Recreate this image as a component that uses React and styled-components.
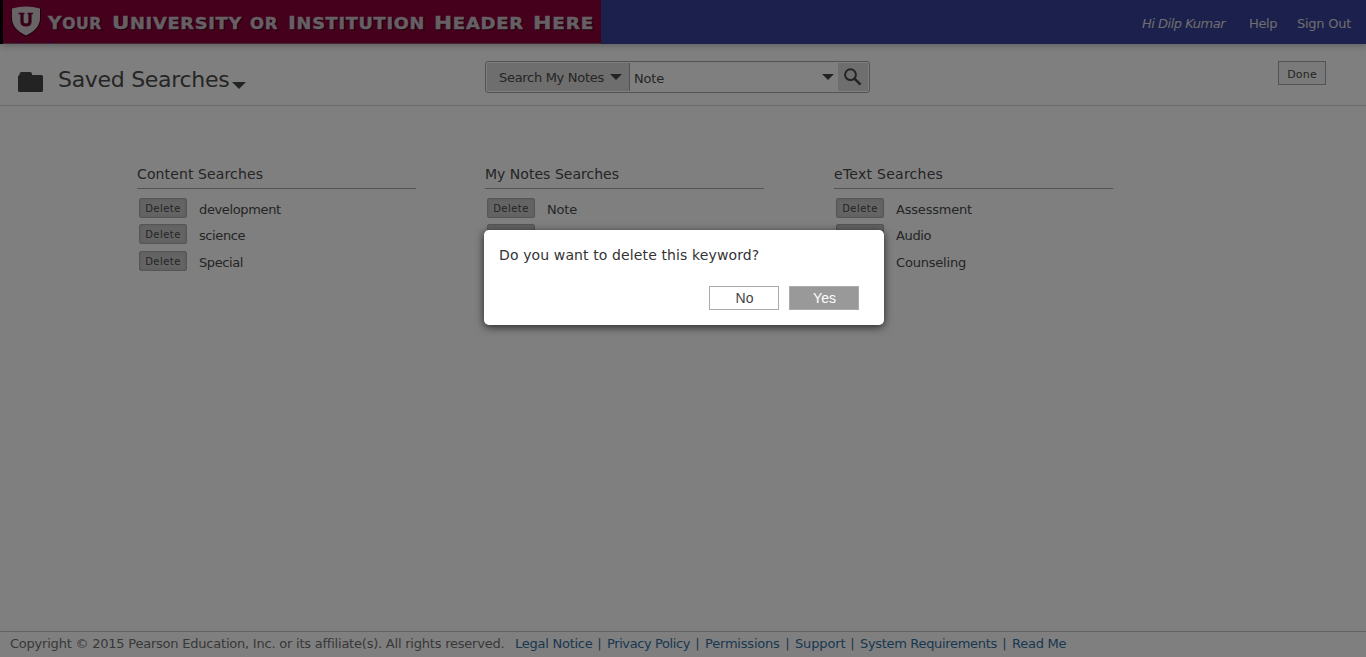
import React from "react";
import styled, { createGlobalStyle } from "styled-components";

const GlobalStyle = createGlobalStyle`
  * { box-sizing: border-box; }
  body {
    margin: 0;
    overflow: hidden;
    background: #fff;
    color: #4a4a4a;
    font-family: "DejaVu Sans", Verdana, sans-serif;
    font-size: 13px;
  }
`;

const Page = styled.div`
  height: 657px;
  display: flex;
  flex-direction: column;
`;

const Header = styled.header`
  height: 44px;
  flex: none;
  display: flex;
  justify-content: space-between;
  background: #384099;
  box-shadow: 0 1px 8px rgba(0, 0, 0, 0.3);
`;

const Banner = styled.svg`
  display: block;
  width: 601px;
  height: 44px;
`;

const UserNav = styled.nav`
  display: flex;
  padding: 16px 15px 0 0;
  line-height: 16px;
  color: #ddd;
`;

const NavItem = styled.span`
  width: ${(p) => p.$w}px;
  margin-left: ${(p) => p.$gap || 0}px;
  font-style: ${(p) => (p.$italic ? "italic" : "normal")};
  white-space: nowrap;
  letter-spacing: ${(p) => p.$ls || 0}px;
`;

const Toolbar = styled.div`
  height: 62px;
  flex: none;
  display: flex;
  align-items: flex-start;
  border-bottom: 1px solid #d6d6d6;
`;

const TitleGroup = styled.div`
  display: flex;
  width: 485px;
  padding: 20px 0 0 18px;
`;

const FolderIcon = styled.svg`
  width: 25px;
  height: 20px;
  margin: 8px 15px 0 0;
`;

const Title = styled.h1`
  margin: 0;
  width: 173px;
  font-size: 22px;
  font-weight: 400;
  line-height: 32px;
  letter-spacing: -0.3px;
  white-space: nowrap;
`;

const Caret = styled.span`
  width: 0;
  height: 0;
  flex: none;
  border: solid transparent;
  border-width: ${(p) => p.$h || 6}px ${(p) => p.$half || 6}px 0;
  border-top-color: #464646;
`;

const TitleCaret = styled(Caret)`
  margin: 18px 0 0 1px;
`;

const SearchBox = styled.div`
  display: flex;
  width: 385px;
  height: 32px;
  margin-top: 17px;
  padding: 1px;
  border: 1px solid #a6a6a6;
  border-radius: 3px;
`;

const ScopeButton = styled.div`
  width: 142px;
  display: flex;
  align-items: center;
  justify-content: space-between;
  padding: 0 7px 0 12px;
  background: #dcdcdc;
  box-shadow: 1px 0 0 #a6a6a6;
  white-space: nowrap;
  letter-spacing: -0.3px;
`;

const SearchField = styled.div`
  width: 209px;
  display: flex;
  align-items: center;
  justify-content: space-between;
  padding: 2px 4px 0 5px;
  letter-spacing: -0.2px;
`;

const FieldCaret = styled(Caret)`
  margin-top: -2px;
`;

const SearchButton = styled.div`
  flex: 1;
  display: flex;
  align-items: center;
  justify-content: center;
  background: #dcdcdc;
  svg {
    width: 18px;
    height: 18px;
    margin-right: 1px;
  }
`;

const DoneButton = styled.div`
  width: 48px;
  height: 24px;
  margin: 17px 40px 0 auto;
  border: 1px solid #a6a6a6;
  background: #f4f4f4;
  font-size: 11px;
  line-height: 25px;
  letter-spacing: 0.2px;
  text-align: center;
`;

const Columns = styled.main`
  flex: 1;
  display: grid;
  grid-template-columns: 348px 349px 279px;
  padding: 58px 0 0 137px;
`;

const Column = styled.section`
  width: 279px;
`;

const ColumnTitle = styled.h2`
  margin: 0 0 9px;
  height: 25px;
  border-bottom: 1px solid #a6a6a6;
  font-size: 14px;
  font-weight: 400;
  line-height: 20px;
  letter-spacing: ${(p) => p.$ls || 0}px;
`;

const Row = styled.div`
  display: flex;
  height: 20px;
  margin: 0 0 ${(p) => p.$below}px 2px;
`;

const DeleteButton = styled.div`
  width: 48px;
  height: 20px;
  margin-right: 12px;
  border: 1px solid #adadad;
  border-radius: 2px;
  background: #c8c8c8;
  box-shadow: inset 0 0 3px #b4b4b4;
  font-size: 10px;
  line-height: 19px;
  letter-spacing: 0.45px;
  text-align: center;
`;

const Keyword = styled.span`
  line-height: 24px;
  letter-spacing: ${(p) => p.$ls || 0}px;
`;

const Footer = styled.footer`
  height: 26px;
  flex: none;
  display: flex;
  border-top: 1px solid #c4c4c4;
  padding-left: 10px;
  line-height: 24px;
  color: #707070;
  white-space: nowrap;
`;

const Copyright = styled.span`
  width: 505px;
  letter-spacing: -0.22px;
`;

const FooterLinks = styled.span`
  display: flex;
  color: #336f9f;
`;

const FooterLink = styled.span`
  width: ${(p) => p.$w}px;
  letter-spacing: ${(p) => p.$ls}px;
`;

const Divider = styled.span`
  width: 15px;
  text-align: center;
`;

const Overlay = styled.div`
  position: absolute;
  inset: 0;
  display: flex;
  align-items: flex-start;
  padding: 230px 0 0 484px;
  background: rgba(0, 0, 0, 0.5);
`;

const Dialog = styled.div`
  width: 400px;
  height: 95px;
  padding: 15px 25px 0 15px;
  border-radius: 5px;
  background: #fff;
  color: #333;
  box-shadow: 0 2px 8px rgba(0, 0, 0, 0.7);
`;

const Question = styled.p`
  margin: 0 0 21px;
  font-size: 14px;
  line-height: 20px;
  letter-spacing: 0.12px;
  white-space: nowrap;
`;

const Actions = styled.div`
  display: flex;
  justify-content: flex-end;
  gap: 10px;
`;

const ActionButton = styled.div`
  width: 70px;
  height: 24px;
  border: 1px solid #aaa;
  background: ${(p) => (p.$primary ? "#999" : "#fff")};
  color: ${(p) => (p.$primary ? "#fff" : "#444")};
  font-family: "Liberation Sans", Arial, sans-serif;
  font-size: 14px;
  line-height: 22px;
  text-align: center;
  text-indent: 1px;
`;

const bannerWords = [
  ["Y", "OUR", 48, 54],
  ["U", "NIVERSITY", 112, 130],
  ["", "OR", 250, 28],
  ["I", "NSTITUTION", 288, 137],
  ["H", "EADER", 434, 90],
  ["H", "ERE", 533, 61],
];

const columns = [
  {
    title: "Content Searches",
    ls: 0.12,
    items: [["development", -0.36], ["science", -0.4], ["Special", -0.4]],
  },
  {
    title: "My Notes Searches",
    ls: 0.02,
    items: [["Note", -0.2]],
    hidden: 1,
  },
  {
    title: "eText Searches",
    ls: 0.27,
    items: [["Assessment", -0.2], ["Audio", -0.35], ["Counseling", -0.2]],
  },
];

const rowGaps = [6, 7, 0];

const links = [
  ["Legal Notice", 77, -0.25],
  ["Privacy Policy", 83, -0.4],
  ["Permissions", 75, -0.2],
  ["Support", 50, -0.15],
  ["System Requirements", 137, -0.32],
  ["Read Me", 55, -0.25],
];

function InstitutionBanner() {
  return (
    <Banner viewBox="0 0 601 44">
      <rect width="601" height="44" fill="#8a0038" />
      <rect width="3" height="44" fill="#000" />
      <rect x="3" y="43" width="598" height="1" fill="#865064" />
      <rect x="17" y="42" width="4" height="1" fill="#5a0090" />
      <rect x="48" y="42" width="4" height="1" fill="#5a0090" />
      <path d="M12 9Q19 9 26 7.500Q33 9 41 9V20Q40 30 26 37Q12 30 11 20Z" fill="#40001c" />
      <path d="M12 8.500Q19 6.500 26 6.500Q33 6.500 40 8.500V18Q40 29 26 35.500Q12 29 12 18Z" fill="#d2c8cc" />
      <path d="M22 13.500V21.500Q22 25 26 25Q30 25 30 21.500V13.500" fill="none" stroke="#700030" strokeWidth="3.200" />
      <path d="M18.500 13.500H24.500M27.500 13.500H33" stroke="#700030" strokeWidth="1.500" />
      {["shadow", "face"].map((layer) => (
        <g
          key={layer}
          aria-hidden={layer === "shadow"}
          fill={layer === "shadow" ? "#38001a" : "#cdbfc6"}
          stroke={layer === "shadow" ? "#38001a" : "#cdbfc6"}
          strokeWidth="0.4"
          transform={layer === "shadow" ? "translate(1 1.300)" : undefined}
          fontFamily="DejaVu Sans"
          fontWeight="700"
        >
          {bannerWords.map(([cap, rest, x, w]) => (
            <text key={x} x={x} y="29" textLength={w} lengthAdjust="spacingAndGlyphs" letterSpacing="0.6">
              <tspan fontSize="18">{cap}</tspan>
              <tspan fontSize="15">{rest}</tspan>
            </text>
          ))}
        </g>
      ))}
    </Banner>
  );
}

export default function App() {
  return (
    <>
      <GlobalStyle />
      <Page>
        <Header>
          <InstitutionBanner />
          <UserNav>
            <NavItem $w={83} $italic $ls={-0.5}>Hi Dilp Kumar</NavItem>
            <NavItem $w={29} $gap={24} $ls={-0.4}>Help</NavItem>
            <NavItem $w={54} $gap={19} $ls={-0.25}>Sign Out</NavItem>
          </UserNav>
        </Header>
        <Toolbar>
          <TitleGroup>
            <FolderIcon viewBox="0 0 25 20">
              <path d="M0 4L1.500 3V2Q1.500 0 3.500 0H12Q14 0 14 2V3H23.500Q25 3 25 4.500V18.500Q25 20 23.500 20H1.500Q0 20 0 18.500Z" fill="#464646" />
            </FolderIcon>
            <Title>Saved Searches</Title>
            <TitleCaret $half={7.5} $h={7} />
          </TitleGroup>
          <SearchBox>
            <ScopeButton>
              Search My Notes
              <Caret />
            </ScopeButton>
            <SearchField>
              Note
              <FieldCaret />
            </SearchField>
            <SearchButton>
              <svg viewBox="0 0 18 18" fill="none" stroke="#464646">
                <circle cx="6.500" cy="6.700" r="5.400" strokeWidth="2" />
                <path d="M10.500 10.700L16.500 16.700" strokeWidth="2.400" />
              </svg>
            </SearchButton>
          </SearchBox>
          <DoneButton>Done</DoneButton>
        </Toolbar>
        <Columns>
          {columns.map((column) => (
            <Column key={column.title}>
              <ColumnTitle $ls={column.ls}>{column.title}</ColumnTitle>
              {column.items.map(([item, ls], i) => (
                <Row key={item} $below={rowGaps[i]}>
                  <DeleteButton>Delete</DeleteButton>
                  <Keyword $ls={ls}>{item}</Keyword>
                </Row>
              ))}
              {column.hidden && (
                <Row $below={0}>
                  <DeleteButton />
                </Row>
              )}
            </Column>
          ))}
        </Columns>
        <Footer>
          <Copyright>
            Copyright © 2015 Pearson Education, Inc. or its affiliate(s). All rights reserved.
          </Copyright>
          <FooterLinks>
            {links.map(([label, w, ls], i) => (
              <React.Fragment key={label}>
                {i > 0 && <Divider>|</Divider>}
                <FooterLink $w={w} $ls={ls}>{label}</FooterLink>
              </React.Fragment>
            ))}
          </FooterLinks>
        </Footer>
      </Page>
      <Overlay>
        <Dialog>
          <Question>Do you want to delete this keyword?</Question>
          <Actions>
            <ActionButton>No</ActionButton>
            <ActionButton $primary>Yes</ActionButton>
          </Actions>
        </Dialog>
      </Overlay>
    </>
  );
}
